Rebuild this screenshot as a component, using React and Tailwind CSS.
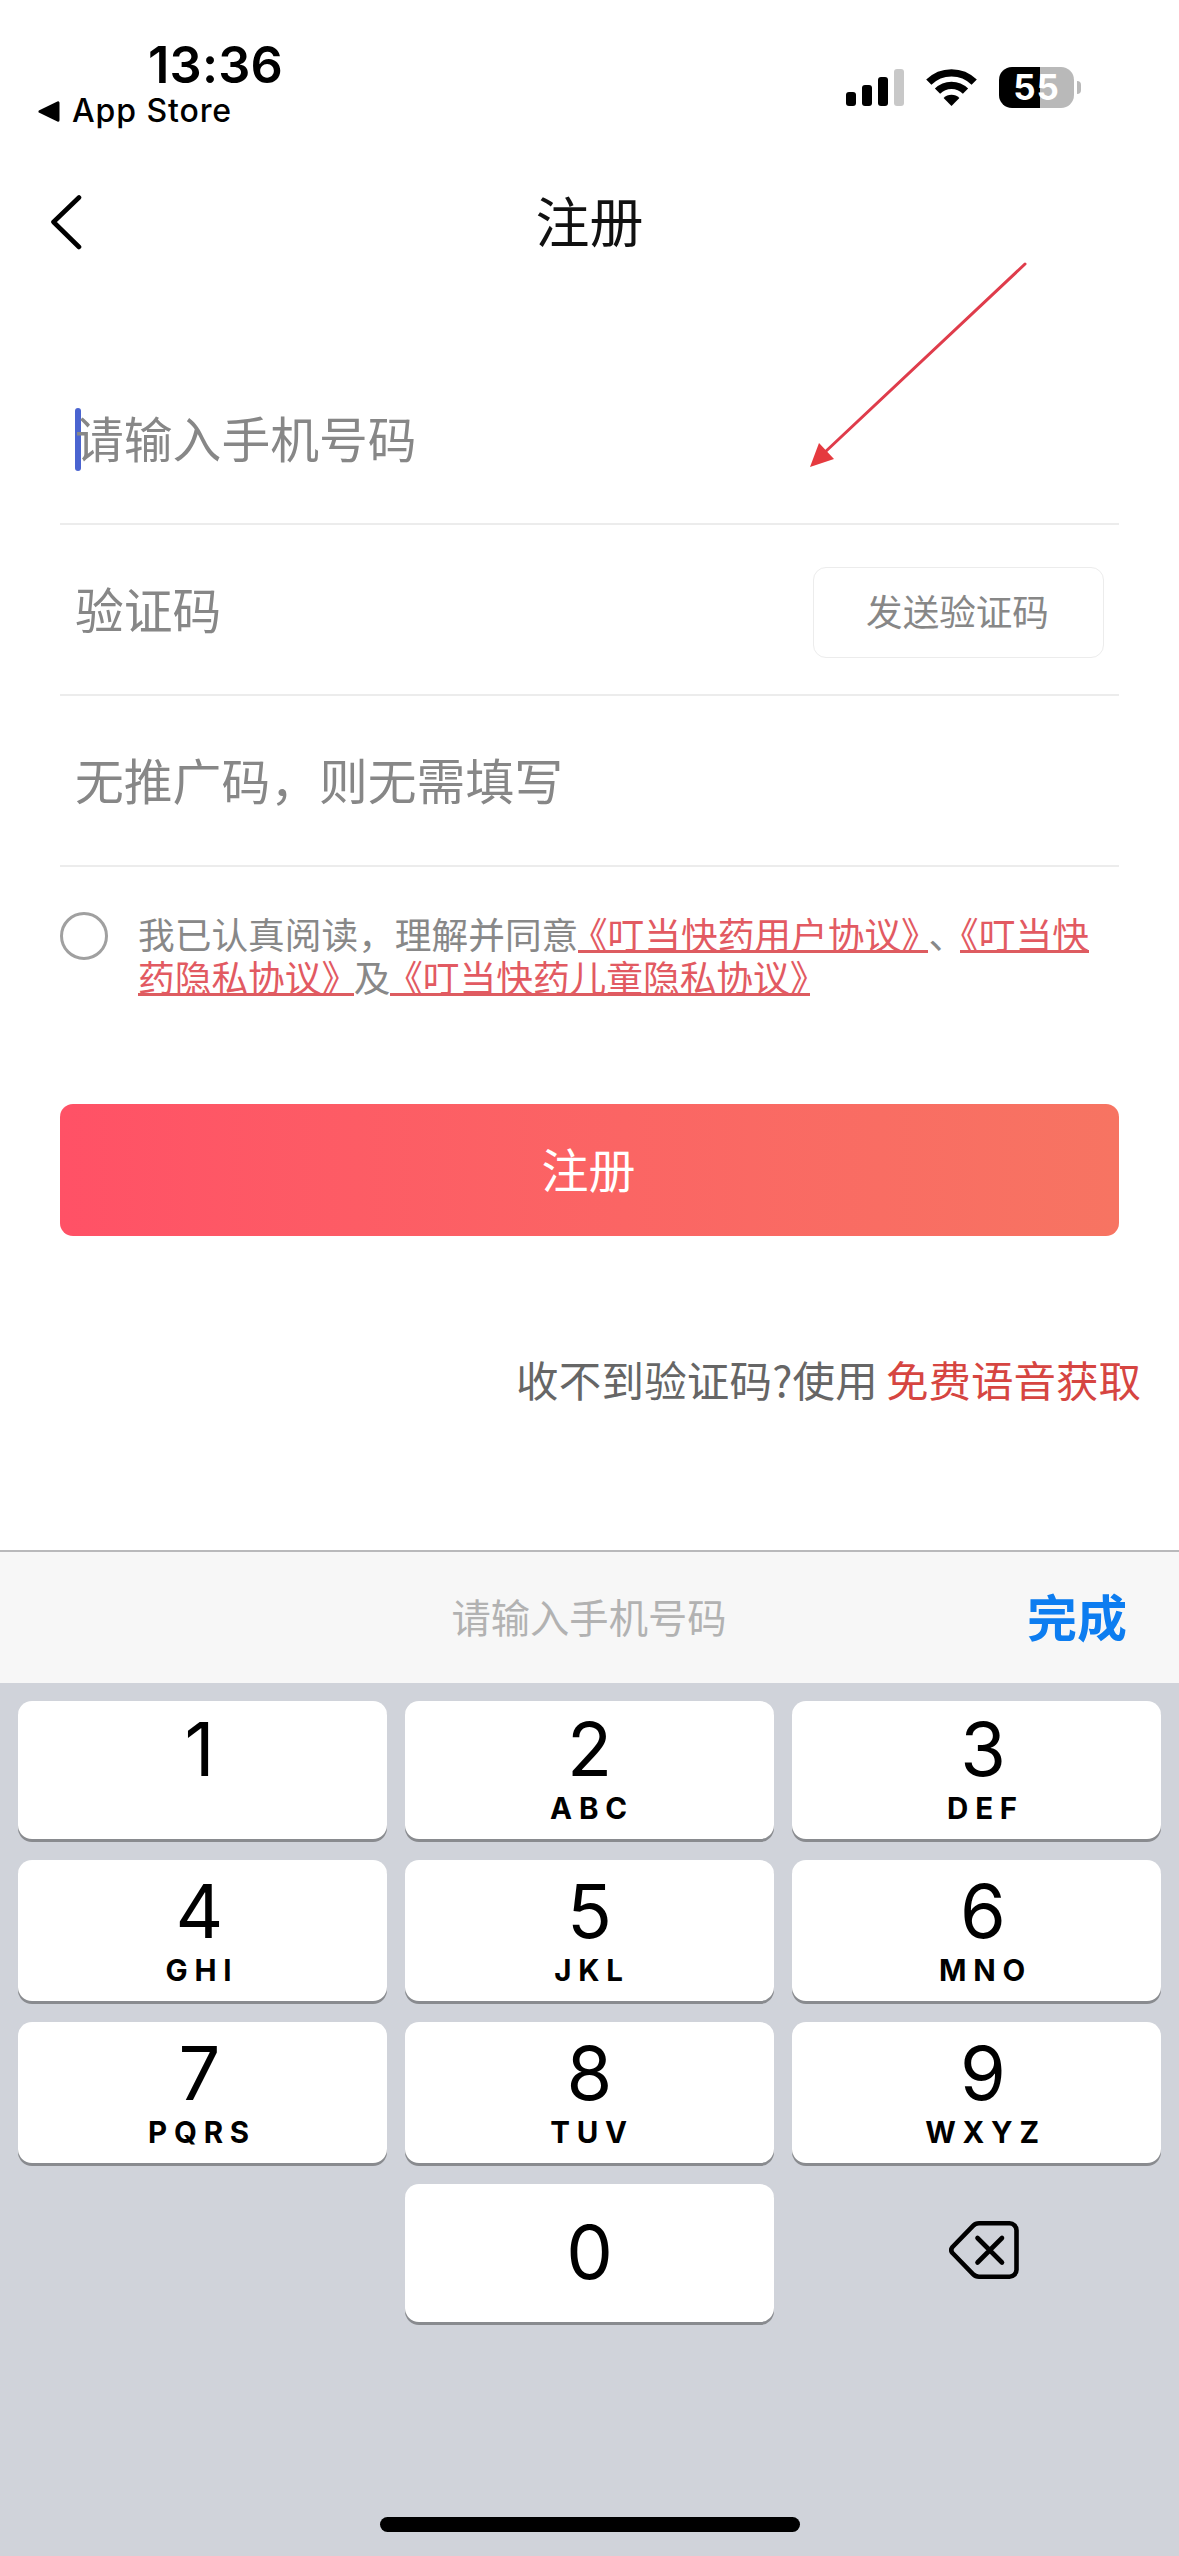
import React from "react";

const ROWS = [
  { size: "h-[138px] mb-[21px] pt-[21px]", keys: [["1", ""], ["2", "ABC"], ["3", "DEF"]] },
  { size: "h-[141px] mb-[21px] pt-[24px]", keys: [["4", "GHI"], ["5", "JKL"], ["6", "MNO"]] },
  { size: "h-[141px] mb-[21px] pt-[24px]", keys: [["7", "PQRS"], ["8", "TUV"], ["9", "WXYZ"]] },
];

// Labels of the outer columns sit slightly off the key centre.
const COLUMN_PAD = ["pr-[6px]", "", "pl-[13px]"];

const KEY =
  "w-[369px] rounded-[14px] bg-white shadow-[0_3px_0_#898b8f] flex flex-col items-center";

function StatusBar() {
  return (
    <div className="flex h-[150px] justify-between font-[Inter,sans-serif] text-black">
      <div className="pl-[38px] pt-[40px]">
        <div className="pl-[110px] text-[50.5px] font-semibold leading-[50px] tracking-[0.2px]">13:36</div>
        <div className="flex items-center gap-[12px] pt-[1px]">
          <svg className="h-[21px] w-[22px]" viewBox="0 0 22 21">
            <path d="M2 10.5 20 1.8v17.4z" stroke="#000" strokeWidth="3" strokeLinejoin="round" />
          </svg>
          <span className="text-[32px] font-medium leading-[40px] tracking-[0.9px]">App Store</span>
        </div>
      </div>
      <div className="flex items-start pr-[98px] pt-[67px]">
        <div className="mt-[2px] flex h-[37px] items-end gap-[6px]">
          <i className="h-[14px] w-[10px] rounded-[3px] bg-black" />
          <i className="h-[21px] w-[10px] rounded-[3px] bg-black" />
          <i className="h-[29px] w-[10px] rounded-[3px] bg-black" />
          <i className="h-[37px] w-[10px] rounded-[3px] bg-[#c8c8c8]" />
        </div>
        <svg className="ml-[22px] mt-[1px] h-[38px] w-[51px]" viewBox="0 0 51 38">
          <g fill="none" stroke="#000" strokeWidth="7.4">
            <path d="M2.8 14.2a32.2 32.2 0 0 1 45.4 0" />
            <path d="M11.5 23.2a19.8 19.8 0 0 1 28 0" />
          </g>
          <path d="M25.5 38 17.6 30.1a11.2 11.2 0 0 1 15.8 0z" />
        </svg>
        <div className="ml-[22px] flex h-[41px] w-[75px] items-center justify-center rounded-[13px] bg-[linear-gradient(90deg,#000_41px,#b9b9b9_41px)] text-[35px] font-bold leading-[41px] tracking-[1px] text-white">
          55
        </div>
        <i className="ml-[3px] mt-[14px] h-[13px] w-[4px] rounded-r-full bg-[#b9b9b9]" />
      </div>
    </div>
  );
}

function Header() {
  return (
    <div className="flex h-[145px] items-center pl-[50px]">
      <svg className="h-[56px] w-[32px]" viewBox="0 0 32 56" fill="none" stroke="#000" strokeWidth="4.6" strokeLinecap="round" strokeLinejoin="round">
        <path d="M29 2.5 3.5 27 29 52" />
      </svg>
      <h1 className="-ml-[82px] flex-1 pb-[6px] text-center text-[54px] leading-[60px] text-[#111]">注册</h1>
    </div>
  );
}

function Agreement() {
  const link = "h-[37px] border-b-[3px] border-[#dd5c60] text-[#e25a62] [font-feature-settings:'halt']";
  return (
    <div className="flex h-[135px] pt-[45px]">
      <span className="size-[48px] rounded-full border-[3px] border-[#a0a0a0]" />
      <div className="ml-[30px] mt-[3.5px] text-[36.7px] leading-[34px] whitespace-nowrap text-[#888]">
        <div className="flex h-[43px]">
          <span>我已认真阅读，理解并同意</span>
          <span className={link + " pl-[11px] pr-[9px]"}>《叮当快药用户协议》</span>
          <span className="w-[32px]">、</span>
          <span className={link}>《叮当快</span>
        </div>
        <div className="flex h-[43px]">
          <span className={link + " pr-[14px]"}>药隐私协议》</span>
          <span>及</span>
          <span className={link + " pl-[14px] pr-[2px]"}>《叮当快药儿童隐私协议》</span>
        </div>
      </div>
    </div>
  );
}

function Form() {
  const field = "flex items-center border-b-2 border-[#ececec] px-[15px] text-[48.8px] text-[#878787]";
  return (
    <div className="px-[60px]">
      <div className={field + " h-[230px] pt-[60px]"}>
        <i className="h-[63px] w-[6px] rounded-full bg-[#4a64d0]" />
        <span className="-ml-[6px] pb-[4px]">请输入手机号码</span>
      </div>
      <div className={field + " h-[171px] justify-between"}>
        <span className="pb-[3px]">验证码</span>
        <span className="mt-[5px] flex h-[91px] w-[291px] items-center justify-center rounded-[13px] border border-[#ececec] pr-[2px] pb-[2px] text-[36.6px]">
          发送验证码
        </span>
      </div>
      <div className={field + " h-[171px] pb-[3px]"}>无推广码，则无需填写</div>
      <Agreement />
    </div>
  );
}

function Keypad() {
  return (
    <div className="h-[873px] bg-[#d0d3da] px-[18px] pt-[18px] font-[Inter,sans-serif] text-black">
      {ROWS.map((row) => (
        <div key={row.keys[0][0]} className="flex gap-[18px]">
          {row.keys.map(([digit, letters], column) => (
            <div key={digit} className={KEY + " " + row.size + " " + COLUMN_PAD[column]}>
              <span className="text-[74px] leading-[54px]">{digit}</span>
              <span className="mt-[16px] pl-[5px] text-[29.5px] font-bold leading-[32px] tracking-[6.8px]">{letters}</span>
            </div>
          ))}
        </div>
      ))}
      <div className="flex gap-[18px]">
        <div className="w-[369px]" />
        <div className={KEY + " h-[138px] justify-center pb-[3px]"}>
          <span className="text-[74px] leading-[54px]">0</span>
        </div>
        <div className="flex h-[132px] w-[369px] items-center justify-center pl-[15px]">
          <svg className="h-[58px] w-[70px]" viewBox="0 0 70 58" fill="none" stroke="#000" strokeWidth="4.6" strokeLinecap="round" strokeLinejoin="round">
            <path d="M30 2.300H60.500a7 7 0 0 1 7 7V48.700a7 7 0 0 1-7 7H30q-3.500 0-6-2.500L3.500 32q-2.500-3 0-6L24 4.800Q26.500 2.300 30 2.300Z" />
            <path d="M28.500 17 53 41.500M53 17 28.500 41.500" />
          </svg>
        </div>
      </div>
      <div className="mx-auto mt-[195px] h-[15px] w-[420px] rounded-full bg-black" />
    </div>
  );
}

export default function App() {
  return (
    <div className="relative h-[2556px] w-[1179px] overflow-hidden bg-white font-['Noto_Sans_CJK_SC',sans-serif]">
      <StatusBar />
      <Header />
      <Form />
      <div className="px-[60px] pt-[102px]">
        <button className="flex h-[132px] w-full items-center justify-center rounded-[13px] bg-linear-to-r from-[#ff5166] to-[#f77462] pr-[2px] pb-[3px] text-[47px] text-white">
          注册
        </button>
      </div>
      <div className="flex h-[314px] justify-end gap-[8px] pr-[38px] pt-[118px] text-[42.5px] leading-[50px] text-[#666]">
        <span className="tracking-[0.2px]">收不到验证码?使用</span>
        <span className="text-[#d64541]">免费语音获取</span>
      </div>
      <div className="flex h-[133px] items-center border-t-2 border-[#b9b9bb] bg-[#f7f7f7] px-[50px] pb-[2px]">
        <span className="flex-1 pl-[101px] text-center text-[39.3px] text-[#b2b2b2]">请输入手机号码</span>
        <span className="pr-[2px] pb-[2px] text-[50px] font-bold text-[#0d7df0]">完成</span>
      </div>
      <Keypad />
      <svg className="absolute left-[800px] top-[250px] h-[230px] w-[240px]" viewBox="800 250 240 230">
        <path d="M1025 264 824 453" stroke="#df3c4b" strokeWidth="3" strokeLinecap="round" />
        <path d="M810 467 819 443 834 459z" fill="#e53a3f" />
      </svg>
    </div>
  );
}
